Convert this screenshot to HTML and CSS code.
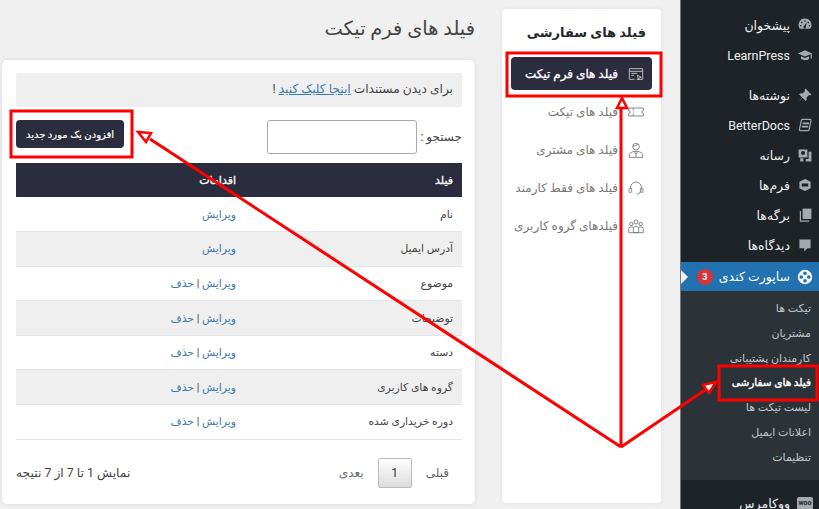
FILE: index.html
```html
<!DOCTYPE html>
<html lang="fa" dir="rtl">
<head>
  <meta charset="UTF-8">
  <title>فیلد های فرم تیکت</title>
  <link rel="stylesheet" href="styles.css">
</head>
<body>

<aside class="adminmenu">
  <ul class="menu-top">
    <li class="menu-item"><svg class="menu-icon" viewBox="0 0 20 20"><path fill-rule="evenodd" d="M10 2a8 8 0 0 1 6.500 12.700H3.500A8 8 0 0 1 10 2zm0 2a1 1 0 1 0 0 2 1 1 0 0 0 0-2zM6 6a1 1 0 1 0 0 2 1 1 0 0 0 0-2zm8 0a1 1 0 1 0 0 2 1 1 0 0 0 0-2zM4.500 10a1 1 0 1 0 0 2 1 1 0 0 0 0-2zm11 0a1 1 0 1 0 0 2 1 1 0 0 0 0-2zM12 7l-3 4a1.600 1.600 0 1 0 2.200 1z"/></svg><span>پیشخوان</span></li>
    <li class="menu-item menu-item-gap"><svg class="menu-icon" viewBox="0 0 20 20"><path d="M10 4 1 8l9 4 7-3v5l1.500 1V8.300L19 8zM5 11.500V15c2 2 8 2 10 0v-3.500l-5 2.200z"/></svg><span>LearnPress</span></li>
    <li class="menu-item"><svg class="menu-icon" viewBox="0 0 20 20"><path d="m10.500 2 7.500 7.500-1.500 1-1.500-.5-3 3c.5 2 0 3.500-1 4.500L7 13.500 2 18l4.500-5L2.500 9c1-1 2.500-1.500 4.500-1l3-3-.5-1.500z"/></svg><span>نوشته‌ها</span></li>
    <li class="menu-item"><svg class="menu-icon" viewBox="0 0 20 20"><path fill="none" stroke="currentColor" stroke-width="1.500" d="M7 3h9.500c.8 0 1.200.6 1 1.400L15 16c-.2.700-.8 1-1.500 1H4c-.8 0-1.200-.6-1-1.400L5.500 4.200C5.700 3.500 6.300 3 7 3z"/><path d="M7 7h8v2H7zM6 11h8v2H6z"/></svg><span>BetterDocs</span></li>
    <li class="menu-item"><svg class="menu-icon" viewBox="0 0 20 20"><path fill-rule="evenodd" d="M2 3h11v10H2zm5.500 2a2.500 2.500 0 1 0 0 5 2.500 2.500 0 0 0 0-5z"/><path d="M14.500 6H18v12h-7v-3h3.500zM4 14h4v4H4z"/></svg><span>رسانه</span></li>
    <li class="menu-item"><svg class="menu-icon" viewBox="0 0 20 20"><path fill-rule="evenodd" d="M10 2.500 17 6v8l-7 3.500L3 14V6zM6 8v4h8V8z"/></svg><span>فرم‌ها</span></li>
    <li class="menu-item"><svg class="menu-icon" viewBox="0 0 20 20"><path d="M7 2h11v13H7z"/><path d="M5 5v12h10v1.500H3.500V5z"/></svg><span>برگه‌ها</span></li>
    <li class="menu-item"><svg class="menu-icon" viewBox="0 0 20 20"><path d="M3 3h14v11h-4l-4 4v-4H3z"/></svg><span>دیدگاه‌ها</span></li>
    <li class="menu-item menu-current"><svg class="menu-icon" viewBox="0 0 20 20"><path fill-rule="evenodd" d="M10 1a9 9 0 1 1 0 18 9 9 0 0 1 0-18zM10 3a2.300 2.300 0 1 0 0 4.600A2.300 2.300 0 0 0 10 3zm0 9.400A2.300 2.300 0 1 0 10 17a2.300 2.300 0 0 0 0-4.600zM5.300 7.700a2.300 2.300 0 1 0 0 4.600 2.300 2.300 0 0 0 0-4.600zm9.400 0a2.300 2.300 0 1 0 0 4.600 2.300 2.300 0 0 0 0-4.600z"/></svg><span>ساپورت کندی</span><b class="badge">3</b></li>
  </ul>
  <ul class="submenu">
    <li>تیکت ها</li>
    <li>مشتریان</li>
    <li>کارمندان پشتیبانی</li>
    <li class="submenu-current">فیلد های سفارشی</li>
    <li>لیست تیکت ها</li>
    <li>اعلانات ایمیل</li>
    <li>تنظیمات</li>
  </ul>
  <div class="menu-item menu-last"><span class="woo-icon">woo</span><span>ووکامرس</span></div>
</aside>

<nav class="fields-nav">
  <h3 class="nav-title">فیلد های سفارشی</h3>
  <ul class="nav-list">
    <li class="nav-item nav-active"><svg class="nav-icon" viewBox="0 0 24 24"><path d="M2 4h20v16H13M2 4v16h8M2 8h20M5 11h9M5 14h4"/><path d="m14 14 6 3-3 1-1 3z"/></svg>فیلد های فرم تیکت</li>
    <li class="nav-item"><svg class="nav-icon" viewBox="0 0 24 24"><path d="M1 6h22v4a2 2 0 0 0 0 4v4H1v-4a2 2 0 0 0 0-4zM8 6v3M8 11v2M8 15v3"/></svg>فیلد های تیکت</li>
    <li class="nav-item"><svg class="nav-icon" viewBox="0 0 24 24"><circle cx="12" cy="7" r="5"/><path d="M7 6c3 0 7-1 8-3M2 23v-4c0-3 5-4 7-5h6c2 1 7 2 7 5v4zM9 14l3 4 3-4M12 18v5"/></svg>فیلد های مشتری</li>
    <li class="nav-item"><svg class="nav-icon" viewBox="0 0 24 24"><path d="M4 14v-3a8 8 0 0 1 16 0v3c0 4-3 7-7 7"/><rect x="1.500" y="12" width="4" height="7" rx="2"/><rect x="18.500" y="12" width="4" height="7" rx="2"/></svg>فیلد های فقط کارمند</li>
    <li class="nav-item"><svg class="nav-icon" viewBox="0 0 24 24"><circle cx="12" cy="6" r="3"/><circle cx="5" cy="9" r="2.500"/><circle cx="19" cy="9" r="2.500"/><path d="M8 22v-7c0-3 8-3 8 0v7zM1 22v-6c0-3 4-3 7-2M23 22v-6c0-3-4-3-7-2M1 22h22"/></svg>فیلدهای گروه کاربری</li>
  </ul>
</nav>

<main class="content">
  <h1 class="page-title">فیلد های فرم تیکت</h1>
  <section class="card">
    <p class="notice">برای دیدن مستندات <a href="#">اینجا کلیک کنید</a> !</p>
    <div class="toolbar">
      <label class="search">جستجو : <input type="text"></label>
      <button class="add-btn">افزودن یک مورد جدید</button>
    </div>
    <table class="fields-table">
      <thead>
        <tr><th class="col-field">فیلد</th><th>اقدامات</th></tr>
      </thead>
      <tbody>
        <tr><td>نام</td><td><a href="#">ویرایش</a></td></tr>
        <tr><td>آدرس ایمیل</td><td><a href="#">ویرایش</a></td></tr>
        <tr><td>موضوع</td><td><a href="#">ویرایش</a> | <a href="#">حذف</a></td></tr>
        <tr><td>توضیحات</td><td><a href="#">ویرایش</a> | <a href="#">حذف</a></td></tr>
        <tr><td>دسته</td><td><a href="#">ویرایش</a> | <a href="#">حذف</a></td></tr>
        <tr><td>گروه های کاربری</td><td><a href="#">ویرایش</a> | <a href="#">حذف</a></td></tr>
        <tr><td>دوره خریداری شده</td><td><a href="#">ویرایش</a> | <a href="#">حذف</a></td></tr>
      </tbody>
    </table>
    <div class="table-footer">
      <div class="pager"><span>قبلی</span><span class="page-num">1</span><span>بعدی</span></div>
      <div class="result-count">نمایش 1 تا 7 از 7 نتیجه</div>
    </div>
  </section>
</main>

<!-- red annotations drawn over the screenshot -->
<svg class="annotations" viewBox="0 0 819 509">
  <g fill="none" stroke="#f00" stroke-width="3">
    <rect x="507" y="53" width="154" height="43"/>
    <rect x="11" y="111" width="121" height="46"/>
    <rect x="719" y="366" width="98" height="34"/>
    <path d="M621 447V108M621 447 150 139M621 447 705 390"/>
  </g>
  <g fill="#fff" stroke="#f00" stroke-width="2.500">
    <path d="m622 98 5 10h-10z"/>
    <path d="m138 132 13 1-5 9z"/>
    <path d="m716 382-7 11-6-8z"/>
  </g>
</svg>

</body>
</html>
```

FILE: styles.css
```css
/* General */
* {
  box-sizing: border-box;
}
html, body {
  height: 100%;
  margin: 0;
}
body {
  display: flex;
  position: relative;
  overflow: hidden;
  background-color: #f0f0f1;
  color: #444;
  font-family: Roboto, "DejaVu Sans", sans-serif;
  font-size: 11px;
}
ul {
  list-style: none;
  margin: 0;
  padding: 0;
}
a {
  color: #3b79ad;
  text-decoration: none;
}

/* Admin menu */
.adminmenu {
  width: 139px;
  flex-shrink: 0;
  padding-top: 10px;
  border-left: 1px solid #777;
  background-color: #1d2327;
  color: #f0f0f1;
  font-size: 12.500px;
}
.menu-item {
  display: flex;
  align-items: center;
  gap: 7px;
  height: 30px;
  padding-right: 6px;
}
.menu-item-gap {
  margin-bottom: 10px;
}
.menu-icon {
  width: 16px;
  height: 16px;
  flex-shrink: 0;
  fill: #a7aaad;
  color: #a7aaad;
}
.menu-current {
  position: relative;
  height: 29px;
  margin-top: 2px;
  background-color: #2271b1;
  color: #fff;
}
.menu-current .menu-icon {
  fill: #fff;
}
.menu-current::after {
  content: "";
  position: absolute;
  left: 0;
  top: 8px;
  border: 7px solid transparent;
  border-left-color: #f0f0f1;
}
.badge {
  width: 16px;
  height: 16px;
  margin-right: -1px;
  border-radius: 50%;
  background-color: #d63638;
  font-size: 9px;
  line-height: 16px;
  text-align: center;
}
.submenu {
  padding: 6px 0 9px;
  background-color: #2c3338;
  color: #c3c4c7;
  font-size: 11px;
}
.submenu li {
  height: 24.800px;
  padding-right: 8px;
  line-height: 24px;
}
.submenu .submenu-current {
  color: #fff;
  font-size: 10.500px;
  -webkit-text-stroke: 0.400px #fff;
}
.menu-last {
  margin-top: 9px;
}
.woo-icon {
  width: 16px;
  height: 13px;
  flex-shrink: 0;
  border-radius: 2px;
  background-color: #a7aaad;
  color: #1d2327;
  font-size: 7px;
  font-weight: bold;
  line-height: 13px;
  text-align: center;
}

/* Custom fields nav */
.fields-nav {
  width: 159px;
  height: 494px;
  flex-shrink: 0;
  margin: 9px 19px 0 0;
  padding: 0 9px;
  border-radius: 4px;
  background-color: #fff;
  box-shadow: 0 0 4px #ddd;
}
.nav-title {
  margin: 14px 0 14px;
  padding-right: 9px;
  margin-right: -3px;
  color: #23282d;
  font-size: 13px;
  line-height: 20px;
}
.nav-item {
  display: flex;
  align-items: center;
  gap: 10px;
  height: 33px;
  margin-bottom: 5px;
  padding-right: 8px;
  color: #777;
  font-size: 12px;
}
.nav-active {
  border-radius: 4px;
  background-color: #2c2c3f;
  color: #fff;
  -webkit-text-stroke: 0.300px #fff;
}
.nav-icon {
  width: 16px;
  height: 16px;
  flex-shrink: 0;
  fill: none;
  stroke: #777;
  stroke-width: 1.300;
}
.nav-active .nav-icon {
  stroke: #ccc;
}

/* Main content */
.content {
  width: 473px;
  flex-shrink: 0;
  margin-right: 27px;
}
.page-title {
  margin: 15px 0 18px;
  color: #444;
  font-size: 19.400px;
  font-weight: normal;
  line-height: 27px;
}
.card {
  height: 444px;
  padding: 13px 13px 13px 14px;
  border-radius: 5px;
  background-color: #fff;
  box-shadow: 0 0 4px #d5d8dc;
}
.notice {
  height: 34px;
  margin: 0 0 13px;
  padding: 0 9px;
  border-radius: 2px;
  background-color: #efefef;
  font-size: 12.200px;
  line-height: 32px;
}
.notice a {
  text-decoration: underline;
}
.toolbar {
  display: flex;
  justify-content: space-between;
  align-items: flex-start;
  height: 43px;
}
.search {
  display: flex;
  align-items: center;
  gap: 3px;
  font-size: 12px;
}
.search input {
  width: 150px;
  height: 34px;
  border: 1px solid #aaa;
  border-radius: 3px;
  background-color: #fff;
}
.add-btn {
  width: 108px;
  height: 28px;
  padding: 0;
  border: 0;
  border-radius: 4px;
  background-color: #2c2c3f;
  color: #fff;
  font-family: inherit;
  font-size: 10px;
  -webkit-text-stroke: 0.200px #fff;
}

/* Table */
.fields-table {
  width: 100%;
  border-collapse: collapse;
  table-layout: fixed;
}
.fields-table th {
  height: 34px;
  padding: 0 9px;
  background-color: #2c2c3f;
  color: #fff;
  font-size: 11px;
  font-weight: normal;
  text-align: right;
  -webkit-text-stroke: 0.300px #fff;
}
.col-field {
  width: 217px;
}
.fields-table td {
  height: 34.600px;
  padding: 0 9px;
  border-bottom: 1px solid #e2e4e7;
  font-size: 10.800px;
}
.fields-table tbody tr:nth-child(even) {
  background-color: #efefef;
}

/* Footer */
.table-footer {
  display: flex;
  justify-content: space-between;
  align-items: center;
  height: 66px;
  padding-right: 13px;
}
.pager {
  display: flex;
  align-items: center;
  gap: 14px;
  color: #666;
  font-size: 12px;
}
.page-num {
  width: 34px;
  height: 30px;
  border: 1px solid #bbb;
  border-radius: 2px;
  background: linear-gradient(#fff, #dcdcdc);
  color: #333;
  line-height: 28px;
  text-align: center;
}
.result-count {
  color: #444;
  font-size: 12.300px;
}

/* Annotations */
.annotations {
  position: absolute;
  top: 0;
  left: 0;
  width: 819px;
  height: 509px;
  pointer-events: none;
}
```
